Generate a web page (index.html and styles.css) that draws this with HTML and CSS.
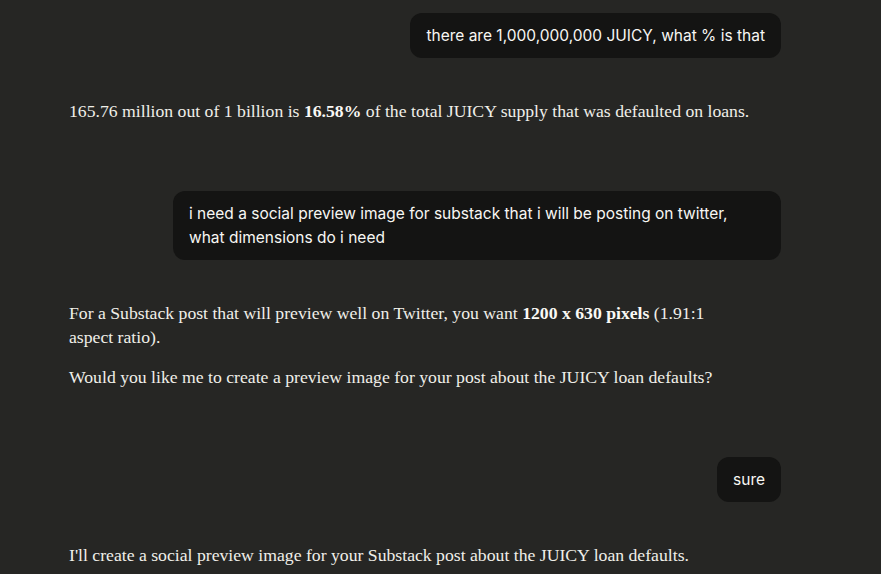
FILE: index.html
```html
<!DOCTYPE html>
<html>
<head>
<meta charset="utf-8">
<link rel="stylesheet" href="styles.css">
</head>
<body>
<main class="chat">
  <div class="turn user"><div class="bubble">there are 1,000,000,000 JUICY, what % is that</div></div>
  <div class="turn assistant">
    <p>165.76 million out of 1 billion is <strong>16.58%</strong> of the total JUICY supply that was defaulted on loans.</p>
  </div>
  <div class="turn user"><div class="bubble">i need a social preview image for substack that i will be posting on twitter, what dimensions do i need</div></div>
  <div class="turn assistant">
    <p>For a Substack post that will preview well on Twitter, you want <strong>1200 x 630 pixels</strong> (1.91:1 aspect ratio).</p>
    <p>Would you like me to create a preview image for your post about the JUICY loan defaults?</p>
  </div>
  <div class="turn user"><div class="bubble">sure</div></div>
  <div class="turn assistant">
    <p>I'll create a social preview image for your Substack post about the JUICY loan defaults.</p>
  </div>
</main>
</body>
</html>
```
FILE: styles.css
```css
html, body {
  margin: 0;
  padding: 0;
  background: #262624;
  height: 100%;
  overflow: hidden;
}
.chat {
  width: 712px;
  margin-left: 69px;
  padding-top: 13px;
  display: flex;
  flex-direction: column;
}
.turn.user {
  display: flex;
  justify-content: flex-end;
}
.bubble {
  background: #141413;
  color: #f8f7f3;
  font-family: Inter, "Noto Sans", sans-serif;
  font-size: 15.5px;
  line-height: 24px;
  padding: 11px 16px 10px;
  border-radius: 12px;
  max-width: 576px;
}
.turn.user + .turn.assistant {
  margin-top: 41px;
}
.turn.assistant + .turn.user {
  margin-top: 68px;
}
.assistant p {
  max-width: 682px;
  margin: 0 0 16px;
  font-family: "Liberation Serif", serif;
  font-size: 17.7px;
  line-height: 24px;
  color: #f0efe9;
}
.assistant p:last-child { margin-bottom: 0; }
.assistant strong { font-weight: 700; color: #faf9f5; }
```
